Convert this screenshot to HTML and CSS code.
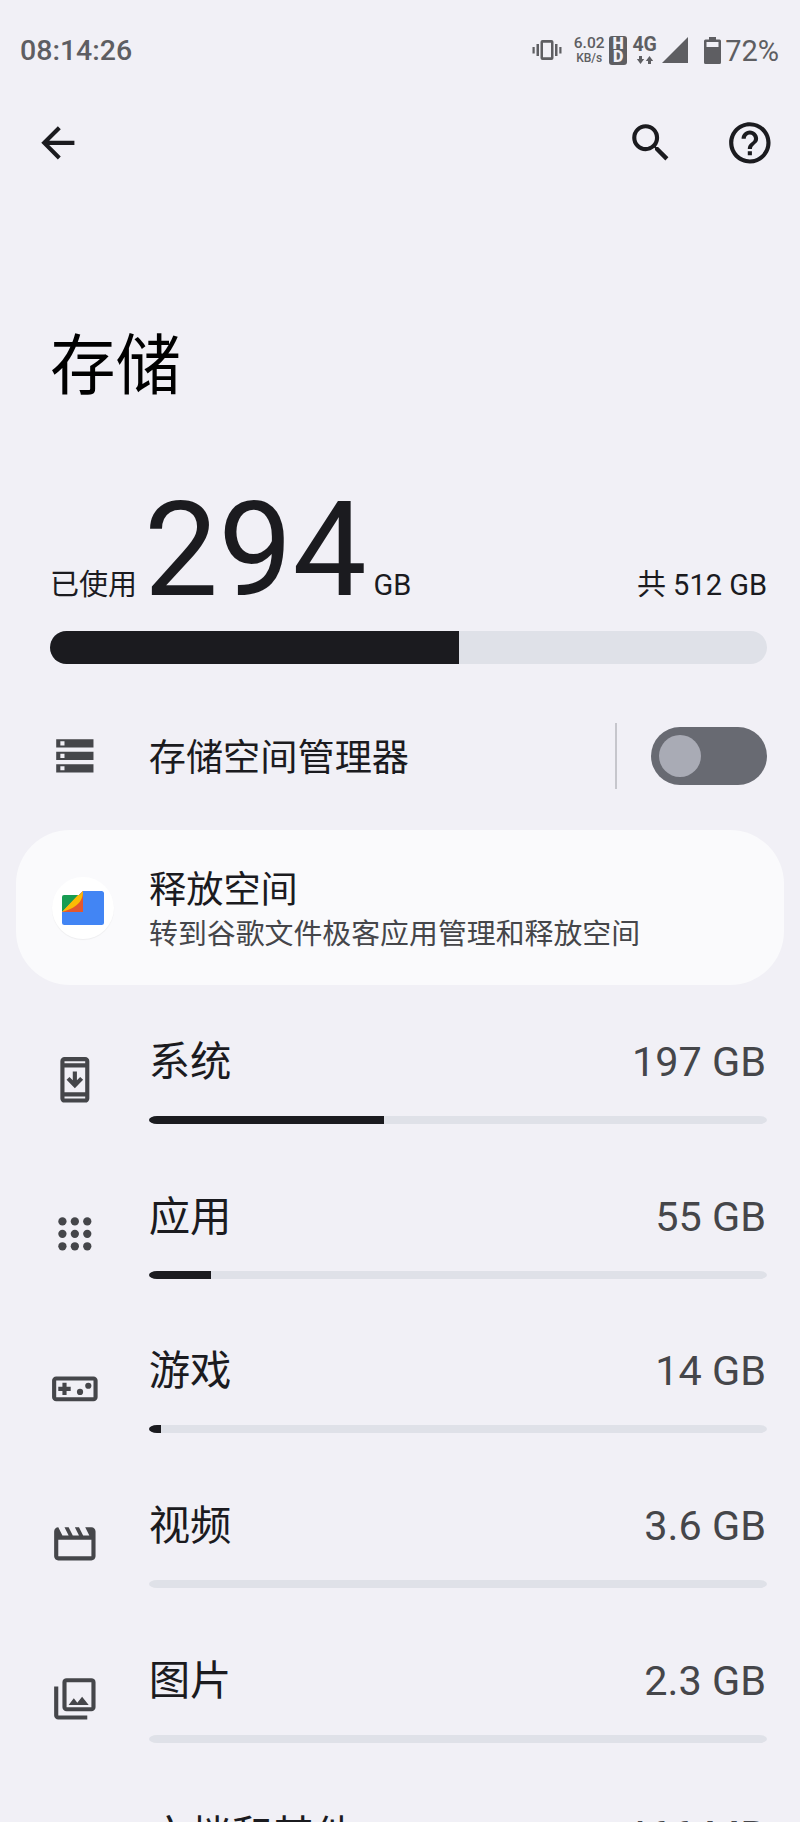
FILE: index.html
```html
<!DOCTYPE html>
<html lang="zh-CN">
<head>
  <meta charset="UTF-8">
  <title>存储</title>
  <link rel="stylesheet" href="styles.css">
</head>
<body>

  <div class="status-bar">
    <span class="clock">08:14:26</span>
    <div class="status-icons">
      <svg class="vibrate" width="30" height="22" viewBox="0 0 30 22" fill="currentColor">
        <path fill-rule="evenodd" d="M10.500 1h9a2 2 0 0 1 2 2v16a2 2 0 0 1-2 2h-9a2 2 0 0 1-2-2V3a2 2 0 0 1 2-2zM11 3.700v14.600h8V3.700z"/>
        <path d="M4.500 5H7v12H4.500zM.5 8h2.200v6.500H.5zM23 5h2.500v12H23zM27.300 8h2.200v6.500h-2.200z"/>
      </svg>
      <div class="net-speed">
        <span class="speed-value">6.02</span>
        <span class="speed-unit">KB/s</span>
      </div>
      <div class="volte"><span>H</span><span>D</span></div>
      <div class="network">
        <span>4G</span>
        <svg width="16" height="8" viewBox="0 0 16 8" fill="currentColor">
          <path d="M2 0h3v3h2.200L3.500 8-.2 3H2zM11 8h3V5h2.200L12.500 0 8.800 5H11z"/>
        </svg>
      </div>
      <svg class="signal" width="26" height="26" viewBox="0 0 26 26" fill="currentColor"><path d="M26 0v26H0z"/></svg>
      <svg class="battery" width="17" height="27" viewBox="0 0 17 27" fill="currentColor">
        <path fill-rule="evenodd" d="M5 0h7v2.500h3.500a1.500 1.500 0 0 1 1.500 1.500v21.500a1.500 1.500 0 0 1-1.500 1.500h-14A1.500 1.500 0 0 1 0 25.500V4a1.500 1.500 0 0 1 1.500-1.500H5zM2.500 5v5h12V5z"/>
      </svg>
      <span class="battery-level">72%</span>
    </div>
  </div>

  <header class="app-bar">
    <svg class="icon" viewBox="0 0 24 24"><path d="M20 11H7.830l5.590-5.590L12 4l-8 8 8 8 1.410-1.410L7.830 13H20z"/></svg>
    <div class="actions">
      <svg class="icon" viewBox="0 0 24 24"><path d="M15.500 14h-.79l-.28-.27A6.471 6.471 0 0 0 16 9.500 6.500 6.500 0 1 0 9.500 16c1.610 0 3.090-.59 4.230-1.570l.27.28v.79l5 4.990L20.490 19zm-6 0C7.010 14 5 11.990 5 9.500S7.010 5 9.500 5 14 7.010 14 9.500 11.990 14 9.500 14z"/></svg>
      <svg class="icon" viewBox="0 0 24 24"><path d="M11 18h2v-2h-2zm1-16C6.480 2 2 6.480 2 12s4.480 10 10 10 10-4.480 10-10S17.520 2 12 2zm0 18c-4.410 0-8-3.590-8-8s3.590-8 8-8 8 3.590 8 8-3.590 8-8 8zm0-14c-2.210 0-4 1.790-4 4h2c0-1.100.9-2 2-2s2 .9 2 2c0 2-3 1.750-3 5h2c0-2.250 3-2.500 3-5 0-2.210-1.790-4-4-4z"/></svg>
    </div>
  </header>

  <h1>存储</h1>

  <section class="usage">
    <div class="usage-text">
      <div><span>已使用</span><span class="used">294</span><span>GB</span></div>
      <span>共 512 GB</span>
    </div>
    <div class="total-bar"><div class="fill" style="width: 57%"></div></div>
  </section>

  <div class="manager">
    <svg class="icon" viewBox="0 0 24 24"><path fill-rule="evenodd" d="M3 20h18v-4H3zm2-3h2v2H5zM3 4v4h18V4zm4 3H5V5h2zm-4 7h18v-4H3zm2-3h2v2H5z"/></svg>
    <span class="manager-label">存储空间管理器</span>
    <div class="divider"></div>
    <div class="switch"><div class="thumb"></div></div>
  </div>

  <div class="card">
    <div class="files-icon">
      <svg width="42" height="34" viewBox="0 0 42 34">
        <path fill="#4285f4" d="M21 0h18.500A2.500 2.500 0 0 1 42 2.500v29a2.500 2.500 0 0 1-2.500 2.500h-37A2.500 2.500 0 0 1 0 31.500V21z"/>
        <path fill="#179c52" d="M2 4h15L0 21V6a2 2 0 0 1 2-2z"/>
        <path fill="#e2572f" d="M21 0v21H0z"/>
        <path fill="#fbbc04" d="M21 0c0 9-4 16-21 21L16 4h1.500z"/>
      </svg>
    </div>
    <div class="card-text">
      <div class="card-title">释放空间</div>
      <div class="card-desc">转到谷歌文件极客应用管理和释放空间</div>
    </div>
  </div>

  <div class="list">
    <div class="row">
      <svg class="icon" viewBox="0 0 24 24"><path fill-rule="evenodd" d="M7 1h10a2 2 0 0 1 2 2v18a2 2 0 0 1-2 2H7a2 2 0 0 1-2-2V3a2 2 0 0 1 2-2zM7 3v1h10V3zM7 6v12h10V6zM7 20v1h10v-1z"/><path d="M11 8h2v4.170l1.590-1.580L16 12l-4 4-4-4 1.410-1.410L11 12.170z"/></svg>
      <div class="content">
        <div class="line"><span>系统</span><span class="size">197 GB</span></div>
        <div class="bar"><div class="fill" style="width: 38%"></div></div>
      </div>
    </div>
    <div class="row">
      <svg class="icon" viewBox="0 0 24 24"><circle cx="6" cy="6" r="2"/><circle cx="12" cy="6" r="2"/><circle cx="18" cy="6" r="2"/><circle cx="6" cy="12" r="2"/><circle cx="12" cy="12" r="2"/><circle cx="18" cy="12" r="2"/><circle cx="6" cy="18" r="2"/><circle cx="12" cy="18" r="2"/><circle cx="18" cy="18" r="2"/></svg>
      <div class="content">
        <div class="line"><span>应用</span><span class="size">55 GB</span></div>
        <div class="bar"><div class="fill" style="width: 10%"></div></div>
      </div>
    </div>
    <div class="row">
      <svg class="icon" viewBox="0 0 24 24"><path fill-rule="evenodd" d="M3 6h18a2 2 0 0 1 2 2v8a2 2 0 0 1-2 2H3a2 2 0 0 1-2-2V8a2 2 0 0 1 2-2zm0 2v8h18V8z"/><path d="M6 9h2v2h2v2H8v2H6v-2H4v-2h2z"/><circle cx="14.500" cy="13.500" r="1.500"/><circle cx="18.500" cy="10.500" r="1.500"/></svg>
      <div class="content">
        <div class="line"><span>游戏</span><span class="size">14 GB</span></div>
        <div class="bar"><div class="fill" style="width: 2%"></div></div>
      </div>
    </div>
    <div class="row">
      <svg class="icon" viewBox="0 0 24 24"><path d="M4 4l2 4h3L7 4h2l2 4h3l-2-4h2l2 4h3l-2-4h3c1.100 0 2 .9 2 2v12c0 1.100-.9 2-2 2H4c-1.100 0-2-.9-2-2V6c0-1.100.9-2 2-2zm0 6v8h16v-8z"/></svg>
      <div class="content">
        <div class="line"><span>视频</span><span class="size">3.6 GB</span></div>
        <div class="bar"></div>
      </div>
    </div>
    <div class="row">
      <svg class="icon" viewBox="0 0 24 24"><path fill-rule="evenodd" d="M8 2h12a2 2 0 0 1 2 2v12a2 2 0 0 1-2 2H8a2 2 0 0 1-2-2V4a2 2 0 0 1 2-2zm0 2v12h12V4z"/><path d="M9 15l2.500-3.300 1.700 2.200 2.300-2.900 3.200 4zM2 6h2v14h14v2H4a2 2 0 0 1-2-2z"/></svg>
      <div class="content">
        <div class="line"><span>图片</span><span class="size">2.3 GB</span></div>
        <div class="bar"></div>
      </div>
    </div>
    <div class="row">
      <svg class="icon" viewBox="0 0 24 24"><path fill-rule="evenodd" d="M6 3h8l6 6v11a2 2 0 0 1-2 2H6a2 2 0 0 1-2-2V5a2 2 0 0 1 2-2zm0 2v15h12V10h-5V5z"/></svg>
      <div class="content">
        <div class="line"><span>文档和其他</span><span class="size">466 MB</span></div>
        <div class="bar"></div>
      </div>
    </div>
  </div>

</body>
</html>
```

FILE: styles.css
```css
* {
  box-sizing: border-box;
}
body {
  margin: 0;
  width: 800px;
  height: 1822px;
  overflow: hidden;
  background-color: #f1f0f6;
  color: #1b1b1f;
  font-family: Roboto, "Noto Sans CJK SC", sans-serif;
}
svg {
  display: block;
  flex-shrink: 0;
}
.icon {
  width: 49.700px;
  height: 49.700px;
  fill: currentColor;
}

/* status bar */
.status-bar {
  display: flex;
  justify-content: space-between;
  align-items: center;
  height: 100px;
  padding: 0 21px 0 20px;
  color: #5e5e62;
}
.clock {
  padding-top: 1px;
  font-size: 28.500px;
  font-weight: 500;
  line-height: 34px;
}
.status-icons {
  display: flex;
  align-items: center;
}
.net-speed {
  display: flex;
  flex-direction: column;
  align-items: center;
  width: 30px;
  margin-left: 12px;
  font-weight: 500;
}
.speed-value {
  font-size: 15.500px;
  line-height: 16px;
}
.speed-unit {
  font-size: 12px;
  line-height: 14px;
}
.volte {
  display: flex;
  flex-direction: column;
  align-items: center;
  width: 18px;
  height: 29px;
  margin-left: 5px;
  padding: 1px 0;
  border-radius: 3px;
  background-color: #5e5e62;
  color: #f1f0f6;
  font-size: 16px;
  font-weight: 900;
  line-height: 13.500px;
}
.network {
  display: flex;
  flex-direction: column;
  align-items: center;
  gap: 2px;
  width: 25px;
  margin-left: 5px;
  font-size: 19.500px;
  font-weight: 700;
  line-height: 18px;
}
.signal {
  margin-left: 5px;
}
.battery {
  margin-left: 16px;
}
.battery-level {
  margin-left: 4px;
  padding-top: 1px;
  font-size: 29px;
  line-height: 34px;
}

/* app bar */
.app-bar {
  display: flex;
  justify-content: space-between;
  align-items: center;
  height: 86px;
  padding: 0 25px 0 33px;
}
.actions {
  display: flex;
  gap: 49.700px;
}

h1 {
  margin: 141px 0 0 50px;
  color: #000;
  font-size: 65.500px;
  font-weight: 400;
  line-height: 80px;
}

/* total usage */
.usage {
  margin-top: 77px;
  padding: 0 33px 0 50px;
}
.usage-text {
  display: flex;
  justify-content: space-between;
  align-items: baseline;
  height: 132px;
  font-size: 29px;
  line-height: 40px;
}
.used {
  margin: 0 7px;
  font-size: 132px;
  line-height: 132px;
}
.total-bar {
  height: 33px;
  margin-top: 15px;
  border-radius: 17px;
  background-color: #dfe1e8;
  overflow: hidden;
}
.fill {
  height: 100%;
  background-color: #1b1b1f;
}

/* storage manager */
.manager {
  display: flex;
  align-items: center;
  height: 149px;
  margin-top: 17px;
  padding: 0 33px 0 50px;
}
.manager .icon,
.row .icon {
  color: #45464a;
}
.manager-label {
  flex: 1;
  margin-left: 49px;
  padding-bottom: 2px;
  font-size: 37.200px;
}
.divider {
  width: 2px;
  height: 66px;
  background-color: #c6c6cc;
}
.switch {
  width: 116px;
  height: 58px;
  margin-left: 34px;
  padding: 8px;
  border-radius: 29px;
  background-color: #686a72;
}
.thumb {
  width: 42px;
  height: 42px;
  border-radius: 50%;
  background-color: #a9abb5;
}

/* free up space */
.card {
  display: flex;
  align-items: center;
  height: 155px;
  margin: 0 16px;
  padding: 0 36px;
  border-radius: 54px;
  background-color: #fafafc;
}
.files-icon {
  display: flex;
  justify-content: center;
  align-items: center;
  width: 62px;
  height: 62px;
  border-radius: 50%;
  background-color: #fff;
  box-shadow: 0 1px 1px rgba(0, 0, 0, 0.05);
}
.card-text {
  margin-left: 35px;
  padding-top: 8px;
}
.card-title {
  font-size: 37.200px;
  line-height: 46px;
}
.card-desc {
  color: #45464a;
  font-size: 28.900px;
  line-height: 43px;
}

/* categories */
.list {
  margin-top: 17px;
}
.row {
  display: flex;
  align-items: center;
  height: 154.800px;
  padding: 0 33px 0 50px;
}
.content {
  flex: 1;
  margin-left: 49px;
  padding-top: 3px;
}
.line {
  display: flex;
  justify-content: space-between;
  font-size: 41.400px;
  line-height: 48px;
}
.size {
  padding-right: 1px;
  color: #45464a;
}
.bar {
  height: 8px;
  margin-top: 30px;
  border-radius: 8px / 4px;
  background-color: #dfe1e8;
  overflow: hidden;
}
```
